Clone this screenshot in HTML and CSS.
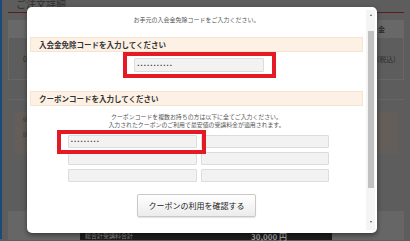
FILE: index.html
```html
<!DOCTYPE html>
<html lang="ja">
<head>
  <meta charset="UTF-8" />
  <title>ご注文詳細</title>
  <meta name="viewport" content="width=device-width, initial-scale=1.0">
  <link rel="stylesheet" href="styles.css">
</head>
<body>
  <div class="page">
    <h1 class="page-title">ご注文詳細</h1>

    <div class="order-table">
      <div class="order-head">
        <span></span>
        <span class="col-price">金</span>
      </div>
      <div class="order-row">
        <span class="col-qty">0</span>
        <span class="col-price">(税込)</span>
      </div>
    </div>

    <div class="notes">
      <p>※</p>
      <p>※</p>
    </div>

    <div class="total">
      <div class="total-bar">
        <span class="total-label">総合計受講料合計</span>
        <span class="total-price">30,000 円</span>
      </div>
    </div>
  </div>

  <div class="modal">
    <div class="modal-body">
      <p class="lead">お手元の入会金免除コードをご入力ください。</p>

      <h3 class="section-title">入会金免除コードを入力してください</h3>
      <div class="code-row">
        <div class="field">
          <input type="text" class="code-input masked" value="•••••••••••">
          <span class="mark mark-code"></span>
        </div>
      </div>

      <h3 class="section-title section-coupon">クーポンコードを入力してください</h3>
      <p class="note">クーポンコードを複数お持ちの方は以下に全てご入力ください。<br>入力されたクーポンのご利用で最安値の受講料金が適用されます。</p>

      <div class="coupon-grid">
        <div class="field">
          <input type="text" class="coupon-input masked" value="•••••••••">
          <span class="mark mark-coupon"></span>
        </div>
        <input type="text" class="coupon-input">
        <input type="text" class="coupon-input">
        <input type="text" class="coupon-input">
        <input type="text" class="coupon-input">
        <input type="text" class="coupon-input">
      </div>

      <div class="actions">
        <button class="confirm-btn">クーポンの利用を確認する</button>
      </div>
    </div>

    <div class="scrollbar">
      <span class="arrow-up"></span>
      <span class="thumb"></span>
      <span class="arrow-down"></span>
    </div>
  </div>
</body>
</html>
```

FILE: styles.css
```css
html, body {
  height: 100%;
}
body {
  margin: 0;
  font-family: "Noto Sans CJK JP", "Noto Sans", sans-serif;
  background: #5d5d5d;
  color: #2e2e2e;
  overflow: hidden;
}
.page {
  height: 100%;
  border-left: 2px solid #1b4a7a;
  padding: 0 6px;
}
.page-title {
  margin: -2px 0 0;
  padding: 0 0 2px 8px;
  font-size: 10px;
  line-height: 12px;
  font-weight: normal;
  color: #303030;
  border-bottom: 1px solid #5a1e1e;
}
.order-table {
  margin-top: 7px;
  font-size: 7px;
}
.order-head, .order-row {
  display: grid;
  grid-template-columns: 1fr 27px;
  align-items: center;
}
.order-head {
  height: 18px;
  background: #686868;
  font-weight: bold;
}
.order-row {
  height: 41px;
  border: 1px solid #676767;
  border-top: none;
}
.col-qty {
  padding-left: 14px;
}
.col-price {
  padding-left: 1px;
}
.notes {
  margin-top: 19px;
  border-top: 1px solid #666;
  padding: 12px 0 12px;
  font-size: 6px;
  background: linear-gradient(#5d5d5d, #5d5d5d) top / 100% 12px no-repeat, #635e5a;
  box-shadow: inset 7px 0 0 #5d5d5d, inset -6px 0 0 #5d5d5d;
}
.notes p {
  margin: 0;
  line-height: 15px;
  padding-left: 14px;
}
.total {
  margin-top: 57px;
  height: 9px;
  padding-top: 20px;
  background: #666;
}
.total-bar {
  display: flex;
  align-items: flex-start;
  gap: 118px;
  margin-left: 72px;
  width: 252px;
  height: 9px;
  padding: 0 5px;
  box-sizing: border-box;
  background: #1d1d1d;
}
.total-label {
  font-size: 6px;
  color: #8a8a8a;
  line-height: 9px;
}
.total-price {
  font-size: 8px;
  font-weight: bold;
  color: #9a9a9a;
  line-height: 11px;
}

/* modal */
.modal {
  position: absolute;
  left: 27px;
  top: 7px;
  width: 350px;
  height: 226px;
  background: #fff;
  border-radius: 5px;
  box-shadow: 0 2px 5px rgba(0, 0, 0, 0.45);
  display: flex;
  overflow: hidden;
}
.modal-body {
  flex: 1;
  color: #333;
}
.lead {
  margin: 9px 0 0;
  font-size: 6px;
  line-height: 8px;
  text-align: center;
  color: #555;
}
.section-title {
  margin: 13px 3px 0;
  height: 15px;
  padding-left: 8px;
  box-sizing: border-box;
  background: #fdf1e5;
  border: 1px solid #f6e3d0;
  font-size: 7.5px;
  line-height: 13px;
  font-weight: bold;
  color: #333;
}
.section-coupon {
  margin-top: 19px;
}
.code-row {
  display: flex;
  justify-content: center;
  padding-left: 5px;
  margin-top: 6px;
}
.field {
  position: relative;
  display: flex;
}
input {
  margin: 0;
  box-sizing: border-box;
  background: #f2f2f2;
  border: 1px solid #dcdcdc;
  border-radius: 1px;
  padding: 0 2px;
  font-family: inherit;
  font-size: 6px;
  color: #222;
  outline: none;
}
.masked {
  font-family: "DejaVu Sans", sans-serif;
  font-size: 4.5px;
  letter-spacing: 0.6px;
  color: #333;
}
.code-input {
  width: 130px;
  height: 14px;
}
.coupon-input {
  width: 100%;
  height: 13px;
}
.mark {
  position: absolute;
  border: 4px solid #e31b25;
  pointer-events: none;
}
.mark-code {
  left: -11px;
  right: -12px;
  top: -6px;
  bottom: -6px;
}
.mark-coupon {
  left: -11px;
  right: -9px;
  top: -5px;
  bottom: -6px;
}
.note {
  margin: 7px 0 0;
  font-size: 5.9px;
  line-height: 8px;
  text-align: center;
  color: #555;
}
.coupon-grid {
  display: grid;
  grid-template-columns: 129px 128px;
  grid-auto-rows: 13px;
  gap: 4px;
  justify-content: center;
  padding-left: 3px;
  margin-top: 6px;
}
.actions {
  display: flex;
  justify-content: center;
  margin-top: 12px;
}
.confirm-btn {
  width: 119px;
  height: 23px;
  padding: 0;
  background: linear-gradient(#ffffff, #ececec);
  border: 1px solid #c9c9c9;
  border-radius: 2px;
  box-shadow: 0 1px 1px rgba(0, 0, 0, 0.12);
  font-family: inherit;
  font-size: 8px;
  color: #222;
  cursor: pointer;
}

/* scrollbar */
.scrollbar {
  width: 9px;
  margin: 3px 2px 3px 0;
  background: #f4f4f4;
  display: flex;
  flex-direction: column;
  align-items: center;
}
.arrow-up, .arrow-down {
  width: 0;
  height: 0;
  border-left: 1.5px solid transparent;
  border-right: 1.5px solid transparent;
}
.arrow-up {
  margin-top: 4px;
  border-bottom: 2px solid #555;
}
.arrow-down {
  margin-top: 33px;
  border-top: 2px solid #555;
}
.thumb {
  width: 6px;
  height: 157px;
  margin-top: 15px;
  background: #c1c1c1;
}
```
